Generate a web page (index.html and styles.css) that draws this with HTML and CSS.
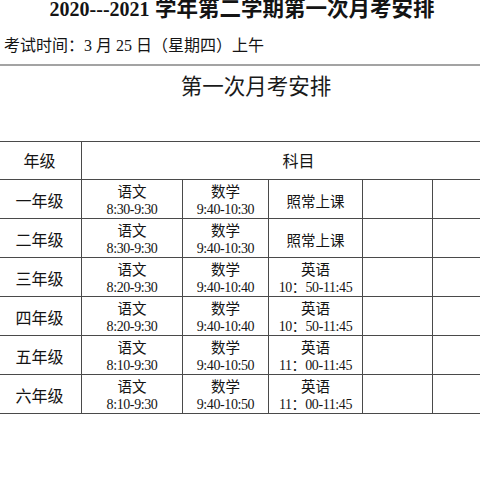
FILE: index.html
```html
<!DOCTYPE html>
<html lang="zh-CN">
<head>
<meta charset="utf-8">
<link rel="stylesheet" href="styles.css">
</head>
<body>
<div class="page">
  <h1 class="title"><span class="num">2020---2021</span> 学年第二学期第一次月考安排</h1>
  <p class="sub">考试时间：3 月 25 日（星期四）上午</p>
  <hr class="rule">
  <h2 class="heading">第一次月考安排</h2>
  <table class="sched">
    <colgroup>
      <col class="c0"><col class="c1"><col class="c2"><col class="c3"><col class="c4"><col class="c5">
    </colgroup>
    <tr class="head">
      <th>年级</th>
      <th colspan="5" class="subj-head">科目</th>
    </tr>
    <tr>
      <td class="grade">一年级</td>
      <td><span class="cn">语文</span><br><span class="t">8:30-9:30</span></td>
      <td><span class="cn">数学</span><br><span class="t">9:40-10:30</span></td>
      <td class="cn">照常上课</td>
      <td></td><td></td>
    </tr>
    <tr>
      <td class="grade">二年级</td>
      <td><span class="cn">语文</span><br><span class="t">8:30-9:30</span></td>
      <td><span class="cn">数学</span><br><span class="t">9:40-10:30</span></td>
      <td class="cn">照常上课</td>
      <td></td><td></td>
    </tr>
    <tr>
      <td class="grade">三年级</td>
      <td><span class="cn">语文</span><br><span class="t">8:20-9:30</span></td>
      <td><span class="cn">数学</span><br><span class="t">9:40-10:40</span></td>
      <td><span class="cn">英语</span><br><span class="t">10：50-11:45</span></td>
      <td></td><td></td>
    </tr>
    <tr>
      <td class="grade">四年级</td>
      <td><span class="cn">语文</span><br><span class="t">8:20-9:30</span></td>
      <td><span class="cn">数学</span><br><span class="t">9:40-10:40</span></td>
      <td><span class="cn">英语</span><br><span class="t">10：50-11:45</span></td>
      <td></td><td></td>
    </tr>
    <tr>
      <td class="grade">五年级</td>
      <td><span class="cn">语文</span><br><span class="t">8:10-9:30</span></td>
      <td><span class="cn">数学</span><br><span class="t">9:40-10:50</span></td>
      <td><span class="cn">英语</span><br><span class="t">11：00-11:45</span></td>
      <td></td><td></td>
    </tr>
    <tr>
      <td class="grade">六年级</td>
      <td><span class="cn">语文</span><br><span class="t">8:10-9:30</span></td>
      <td><span class="cn">数学</span><br><span class="t">9:40-10:50</span></td>
      <td><span class="cn">英语</span><br><span class="t">11：00-11:45</span></td>
      <td></td><td></td>
    </tr>
  </table>
</div>
</body>
</html>
```
FILE: styles.css
```css
html, body {
  margin: 0;
  padding: 0;
  background: #fff;
}
body {
  width: 480px;
  height: 480px;
  overflow: hidden;
  color: #141414;
  font-family: "Liberation Serif", "Noto Sans CJK SC", serif;
}
.page {
  width: 480px;
}
.title {
  margin: 0;
  height: 28px;
  line-height: 18px;
  font-size: 21.5px;
  font-weight: bold;
  text-align: center;
  white-space: nowrap;
  padding-left: 4px;
}
.title .num {
  font-size: 20px;
}
.sub {
  margin: 0;
  height: 36px;
  line-height: 36px;
  font-size: 16px;
  padding-left: 4px;
  white-space: nowrap;
}
.rule {
  margin: 0;
  border: 0;
  height: 2px;
  background: #a3a3a3;
}
.heading {
  margin: 0;
  height: 38px;
  line-height: 38px;
  font-size: 21.5px;
  font-weight: normal;
  font-family: "Noto Sans CJK SC", sans-serif;
  text-align: center;
  padding-left: 32px;
  color: #1a1a1a;
}
.sched {
  margin-top: 37px;
  margin-left: -3px;
  border-collapse: collapse;
  table-layout: fixed;
  width: 518px;
}
.c0 { width: 84px; }
.c1 { width: 101px; }
.c2 { width: 86px; }
.c3 { width: 94px; }
.c4 { width: 70px; }
.c5 { width: 83px; }
.sched th, .sched td {
  border: 1px solid #4a4a4a;
  padding: 2px 0 0;
  text-align: center;
  vertical-align: middle;
  height: 35.5px;
  line-height: 17px;
  font-weight: normal;
}
.sched tr.head th {
  height: 37px;
  font-size: 16px;
  font-family: "Noto Sans CJK SC", sans-serif;
  padding-top: 0;
}
.grade {
  font-size: 16px;
  font-family: "Noto Sans CJK SC", sans-serif;
}
.cn {
  font-size: 14.5px;
  font-family: "Noto Sans CJK SC", sans-serif;
}
.t {
  font-size: 14px;
  letter-spacing: -0.4px;
}
```
